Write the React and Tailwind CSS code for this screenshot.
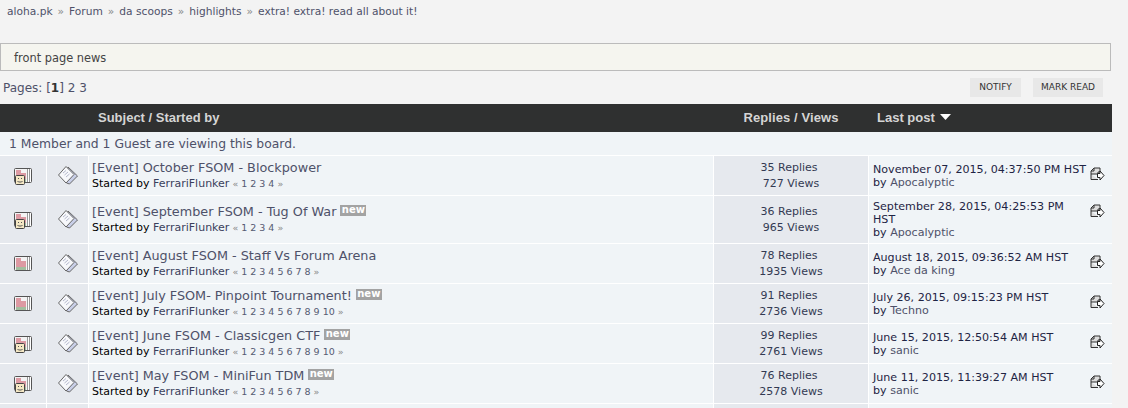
const topics = [
  { title: '[Event] October FSOM - Blockpower', pages: 4, isNew: false, smile: true, replies: 35, views: 727, date: 'November 07, 2015, 04:37:50 PM HST', by: 'Apocalyptic', h: 'h-[39px]' },
  { title: '[Event] September FSOM - Tug Of War', pages: 4, isNew: true, smile: true, replies: 36, views: 965, date: 'September 28, 2015, 04:25:53 PM HST', by: 'Apocalyptic', h: 'h-[47px]' },
  { title: '[Event] August FSOM - Staff Vs Forum Arena', pages: 8, isNew: false, smile: false, replies: 78, views: 1935, date: 'August 18, 2015, 09:36:52 AM HST', by: 'Ace da king', h: 'h-[39px]' },
  { title: '[Event] July FSOM- Pinpoint Tournament!', pages: 10, isNew: true, smile: false, replies: 91, views: 2736, date: 'July 26, 2015, 09:15:23 PM HST', by: 'Techno', h: 'h-[39px]' },
  { title: '[Event] June FSOM - Classicgen CTF', pages: 10, isNew: true, smile: true, replies: 99, views: 2761, date: 'June 15, 2015, 12:50:54 AM HST', by: 'sanic', h: 'h-[39px]' },
  { title: '[Event] May FSOM - MiniFun TDM', pages: 8, isNew: true, smile: true, replies: 76, views: 2578, date: 'June 11, 2015, 11:39:27 AM HST', by: 'sanic', h: 'h-[39px]' },
];

const rowCols = 'grid grid-cols-[46px_41px_624px_154px_243px] gap-x-px';

function TopicIcon({ smile }) {
  return (
    <svg width="18" height="18" viewBox="0 0 18 18" className="block mt-[3px]">
      <rect x="0.5" y="0.5" width="17" height="14" rx="1" fill="#fff" stroke="#555" />
      <path d="M13.500 1v13M15.500 1v13" stroke="#999" />
      <rect x="1" y="1" width="12" height="13" fill="#f4f4f4" />
      <rect x="2" y="2" width="5" height="12" fill="#dd9aa3" />
      <rect x="7" y="5" width="5" height="9" fill="#dd9aa3" />
      <rect x="2" y="11" width="10" height="3" fill="#a3bf9f" />
      {smile && (
        <g>
          <rect x="1.500" y="7.500" width="9" height="9" rx="1" fill="#f5e8c4" stroke="#444" />
          <path d="M4 10.500h1M7 10.500h1M3.500 13l1 1h3l1-1" stroke="#555" fill="none" />
        </g>
      )}
    </svg>
  );
}

function PostIcon() {
  return (
    <svg width="20" height="19" viewBox="0 0 20 19" className="block">
      <path d="M10 1l9.500 9-8 8-3-1z" fill="#c9cfe8" stroke="#666" />
      <path d="M0.500 9L8 0.500 16 8.500 8 17z" fill="#f7f8fb" stroke="#666" />
      <path d="M5 7l3-2.500M6.500 9l3.500-3M8 11l3.500-3" stroke="#b4b8cc" />
    </svg>
  );
}

function LastPostIcon() {
  return (
    <svg width="15" height="14" viewBox="0 0 15 14" className="block mt-[4px]">
      <path d="M1 4l3-3h6v4H8v2H1zM1 7v5.500h7" fill="#ddd" stroke="#333" />
      <path d="M4 1v3H1" fill="none" stroke="#333" />
      <path d="M7.500 6.500h2.500V4l4 4.500-4 4.500v-2.500H7.500z" fill="#fff" stroke="#222" />
    </svg>
  );
}

function Pager({ count }) {
  const nums = [];
  for (let i = 1; i <= count; i++) nums.push(i);
  return (
    <span className="text-[9.5px] ml-[3px] text-[#666]">
      <span className="text-[#888]">«</span>
      {nums.map((n) => (
        <span key={n} className="text-[#555a72] ml-[3px]">{n}</span>
      ))}
      <span className="text-[#888] ml-[3px]">»</span>
    </span>
  );
}

function TopicRow({ topic }) {
  return (
    <div className={`${rowCols} ${topic.h}`}>
      <div className="bg-[#e6e9ee] flex items-center justify-center">
        <TopicIcon smile={topic.smile} />
      </div>
      <div className="bg-[#e6e9ee] flex items-center justify-center">
        <PostIcon />
      </div>
      <div className="bg-[#f0f4f7] pl-[3px] flex flex-col justify-center">
        <div className="text-[12.8px] leading-[16px] text-[#4e5169] flex items-center">
          <span>{topic.title}</span>
          {topic.isNew && (
            <span className="ml-1 h-[11px] w-[26px] bg-[#a3a3a3] text-white text-[10px] leading-[10px] font-bold text-center mb-[3px]">new</span>
          )}
        </div>
        <div className="text-[11px] leading-[15px] text-[#3a3f5c]">
          <span className="text-black">Started by</span> FerrariFlunker
          <Pager count={topic.pages} />
        </div>
      </div>
      <div className="bg-[#e6e9ee] text-[11px] leading-[16px] text-[#333a52] flex flex-col items-center justify-center">
        <span className="mr-[4px]">{topic.replies} Replies</span>
        <span>{topic.views} Views</span>
      </div>
      <div className="bg-[#f0f4f7] pl-[4px] flex items-center text-[11.1px] leading-[13px] text-[#1f2444]">
        <div className="flex items-start">
          <div className="w-[217px]">
            <div className="w-[215px]">{topic.date}</div>
            <div>by <span className="text-[#4e5169]">{topic.by}</span></div>
          </div>
          <LastPostIcon />
        </div>
      </div>
    </div>
  );
}

export default function App() {
  return (
    <div className="h-[408px] w-[1128px] overflow-hidden bg-[#f3f3f3] font-['DejaVu_Sans','Liberation_Sans',sans-serif]">
      <div className="pl-[7px] pt-[4px] h-[43px] text-[10.65px] leading-[15px] text-[#4e5169] flex gap-[5px]">
        <span>aloha.pk</span><span className="text-[#888]">»</span>
        <span>Forum</span><span className="text-[#888]">»</span>
        <span>da scoops</span><span className="text-[#888]">»</span>
        <span>highlights</span><span className="text-[#888]">»</span>
        <span>extra! extra! read all about it!</span>
      </div>
      <div className="w-[1111px] h-[28px] border border-[#bbbbbb] bg-[#f5f5ef] pl-[13px] text-[11.4px] leading-[28px] text-[#444]">
        front page news
      </div>
      <div className="w-[1112px] h-[33px] flex items-start justify-between">
        <div className="pl-[3px] pt-[10px] text-[12px] leading-[15px] text-[#4e5169]">
          Pages: [<b className="text-[#333]">1</b>] 2 3
        </div>
        <div className="flex gap-[12px] pr-[9px] pt-[7px]">
          <span className="h-[19px] w-[51px] text-center bg-[#e8e8e8] text-[9px] leading-[19px] text-[#333]">NOTIFY</span>
          <span className="h-[19px] w-[70px] text-center bg-[#e8e8e8] text-[9px] leading-[19px] text-[#333]">MARK READ</span>
        </div>
      </div>
      <div className={`${rowCols} w-[1112px] h-[28px] bg-[#2f3030] text-[13px] leading-[27px] font-bold text-[#d5d5d5] font-['Liberation_Sans',sans-serif]`}>
        <div />
        <div />
        <div className="pl-[9px]">Subject / Started by</div>
        <div className="text-center tracking-[0.1px]">Replies / Views</div>
        <div className="pl-[8px] pb-[1px] flex items-center gap-[5px]">
          Last post
          <svg width="11" height="6" viewBox="0 0 11 6" className="mb-[2px]"><path d="M0 0h11L5.500 6z" fill="#fff" /></svg>
        </div>
      </div>
      <div className="w-[1112px] h-[23px] bg-[#f0f4f7] pl-[9px] text-[12.35px] leading-[24px] text-[#4e5169]">
        1 Member and 1 Guest are viewing this board.
      </div>
      <div className="w-[1112px] bg-white flex flex-col gap-y-px pt-px">
        {topics.map((t) => (
          <TopicRow key={t.title} topic={t} />
        ))}
        <div className={`${rowCols} h-[10px]`}>
          <div className="bg-[#e6e9ee]" />
          <div className="bg-[#e6e9ee]" />
          <div className="bg-[#f0f4f7]" />
          <div className="bg-[#e6e9ee]" />
          <div className="bg-[#f0f4f7]" />
        </div>
      </div>
    </div>
  );
}
